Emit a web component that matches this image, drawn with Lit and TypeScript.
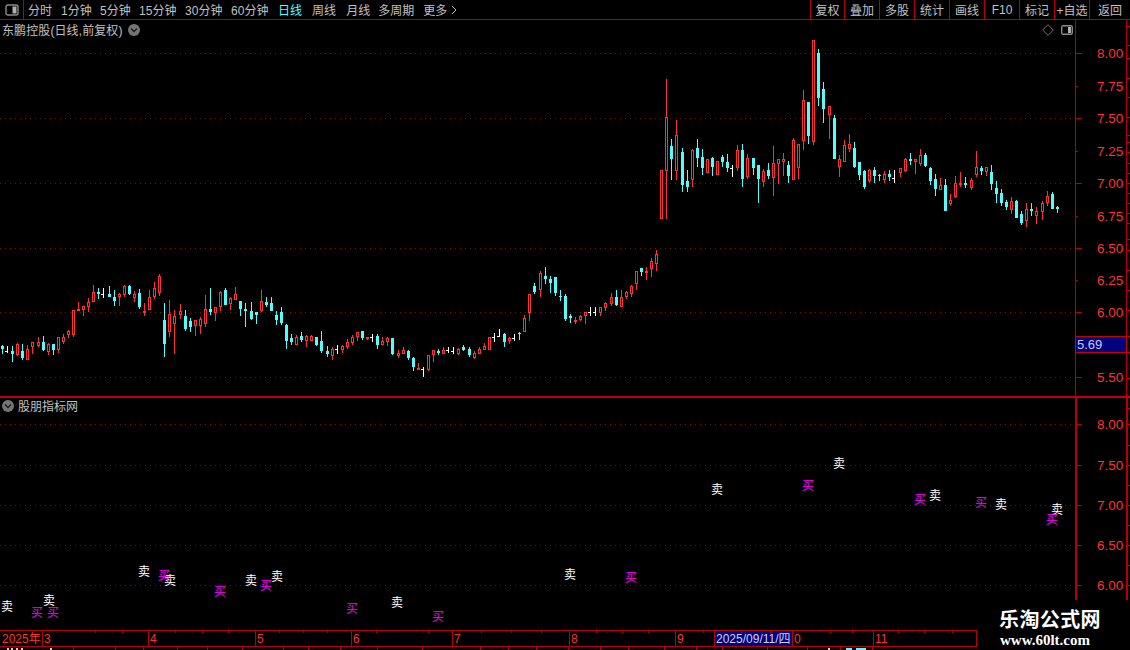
import { LitElement, html, css, svg } from "lit";
import { customElement } from "lit/decorators.js";

type Seg = { ox: number; oy: number; rows: string };
const SEGS: Seg[] = [
  { ox: 0, oy: 270, rows: `7 c 225 229 237 252;22 w 228 243 243 248;37 c 228 243 252 275;52 r 218 222 255 258;67 c 222 243 264 270;82 r 225 237 269 270;97 r 217 217 231 252;115 r 202 217 228 232;130 c 198 216 240 243;145 r 218 222 246 255;160 c 222 223 240 255;175 r 201 201 240 249;190 r 193 201 217 222;205 r 180 183 195 204;220 r 120 120 195 201;235 r 96 117 123 123;250 r 108 108 120 138;265 r 84 96 111 126;280 r 45 66 96 96;295 c 54 66 72 87;310 w 54 72 72 84;328 c 48 72 81 81;343 c 60 81 93 108;358 r 69 72 81 108;373 r 45 48 75 81;388 c 45 48 72 75;403 r 63 72 84 96;418 c 57 69 111 117;433 r 99 123 129 138;448 r 60 81 120 120;463 r 36 54 81 87;478 r 12 18 69 78;493 c 99 150 222 261;508 r 90 132 186 201;523 r 120 138 162 252;541 r 102 123 135 147;556 c 120 138 178 183;571 c 144 153 171 186;586 r 150 150 168 198;601 r 141 147 168 192;616 r 75 117 162 171;631 c 54 117 126 135;646 r 111 111 129 153;661 r 63 66 111 123;676 c 54 60 105 105;691 r 81 84 102 120;706 r 51 72 90 90;721 c 93 93 117 138;736 c 99 117 123 171;754 c 96 123 147 150;769 c 126 126 135 162;784 r 60 93 123 126;799 c 81 96 105 111;814 c 81 99 123 123;829 c 123 135 150 165;844 c 111 126 159 165;859 c 162 165 213 237;874 c 192 204 216 225;889 r 195 201 225 225;904 c 186 198 210 216;919 r 195 198 213 231;934 r 195 198 213 213;949 c 201 201 225 228;964 c 183 213 243 249;982 c 228 243 252 261;997 r 231 237 258 270;1012 w 225 237 237 252` },
  { ox: 340, oy: 230, rows: `7 r 345 348 360 370;22 r 327 336 350 357;37 r 315 321 340 345;52 r 306 306 321 333;67 c 303 303 324 330;82 r 321 321 327 330;97 w 312 321 321 336;112 c 312 318 345 357;127 r 321 333 345 345;142 r 321 324 336 348;157 c 324 324 372 375;175 r 360 369 378 384;190 r 351 360 372 372;205 c 360 363 384 390;220 c 381 384 411 423;235 r 399 414 420 420;250 w 411 417 417 441;265 r 375 375 420 423;280 r 360 360 375 396;295 c 357 363 369 375;310 r 351 360 372 372;325 w 351 360 360 369;340 w 351 363 363 372;355 r 354 357 372 375;370 c 345 351 360 363;388 c 351 357 375 381;403 r 363 369 384 387;418 r 351 357 372 372;433 r 339 348 360 360;448 r 321 321 360 360;463 w 309 321 321 336;478 w 297 318 318 321;493 c 309 312 336 351;508 r 321 324 333 342;523 w 312 324 324 333;538 c 306 309 312 330;553 r 255 264 306 306;568 r 192 192 249 273;583 c 159 168 186 192;601 r 123 129 180 201;616 c 111 138 147 162;631 c 138 147 159 189;646 c 141 141 189 198;661 c 180 198 201 213;676 c 192 198 267 273;691 c 252 258 264 279;706 r 262 270 276 282;721 r 255 258 270 273;736 r 246 246 258 282;751 w 231 246 246 258;766 w 231 246 246 258;781 r 231 231 249 258;796 r 216 219 234 243;814 r 189 201 222 228;829 c 180 201 225 228;844 r 180 201 231 231;859 r 183 186 201 207;874 r 165 168 192 201;889 r 123 123 162 180;904 c 114 114 126 138;919 r 111 123 129 150;934 r 84 93 117 141;949 r 60 72 102 123` },
  { ox: 650, oy: 30, rows: `34 r 420 420 567 567;49 r 147 261 423 567;64 c 327 348 387 450;79 r 270 315 423 450;97 c 354 366 465 486;112 c 420 453 471 486;127 r 357 360 450 471;142 c 327 354 384 411;157 c 357 381 414 435;172 r 387 387 429 429;187 c 381 384 411 438;202 r 393 393 435 435;217 c 375 381 396 411;232 c 372 396 414 426;247 w 405 414 414 441;262 r 345 360 414 423;277 c 342 360 447 471;292 r 372 384 441 447;310 c 384 384 414 435;325 c 405 405 447 519;340 r 417 423 456 471;355 c 399 420 438 447;370 r 348 399 444 498;385 r 387 387 402 462;400 r 369 387 396 438;415 c 393 405 438 459;430 r 324 330 450 450;445 r 342 342 414 447;460 r 180 210 333 360;475 c 216 216 318 342;490 r 30 30 336 345;505 c 57 69 204 228;520 c 156 177 237 279;538 r 228 228 255 327;553 c 255 264 387 387;568 r 375 387 411 441;583 r 330 345 396 396;598 r 312 342 357 366;613 c 336 354 411 414;628 c 396 396 435 450;643 c 420 423 471 477;658 r 417 420 453 459;673 c 411 420 438 459;688 c 432 435 435 453;703 r 423 432 450 459;718 c 420 432 441 453` },
  { ox: 880, oy: 130, rows: `43 w 120 144 144 159;61 r 114 114 129 141;76 r 84 87 123 126;91 c 69 87 93 105;106 r 87 87 95 132;121 r 57 75 102 108;136 c 69 75 108 111;151 c 111 114 153 165;166 c 132 147 177 198;181 r 144 165 180 180;196 c 147 165 243 243;211 r 192 210 222 228;226 r 138 159 201 204;241 r 126 159 165 171;256 c 141 159 165 174;274 r 144 150 174 180;289 r 63 111 135 141;304 c 108 114 123 135;319 r 111 111 126 138;334 c 105 126 162 180;349 c 153 174 192 219;364 c 177 189 219 228;379 c 210 216 231 240;394 r 201 213 240 252;409 c 210 213 264 264;424 c 243 252 279 285;439 r 219 237 273 291;454 c 219 237 243 258;469 r 231 243 258 282;487 r 213 219 246 270;502 r 183 198 219 228;517 c 186 192 237 237;532 c 228 231 237 249` },
];

const RED = "#ff3232";
const CYAN = "#54fcfc";
const LINE = "#b80000";
const GRID = "#7c1010";
const MAIN_TOP = 20;
const SUB_TOP = 398;

const candle = (seg: Seg, row: string) => {
  const [xs, t, a, b, c, d] = row.split(" ");
  const x = Math.round(seg.ox + Number(xs) / 3);
  const py = (v: string) => Math.round(seg.oy + Number(v) / 3) - MAIN_TOP;
  const wt = py(a), bt = py(b), bb = py(c), wb = py(d);
  if (t === "w") {
    return svg`<rect x=${x} y=${wt} width="1" height=${Math.max(wb - wt, 1)} fill="#fff"/><rect x=${x - 2} y=${bt} width="2" height="1" fill="#fff"/>`;
  }
  const col = t === "r" ? RED : CYAN;
  const wick = svg`<rect x=${x} y=${wt} width="1" height=${Math.max(wb - wt, 1)} fill=${col}/>`;
  const h = Math.max(bb - bt, 1);
  if (t === "c" || h < 3) {
    return svg`${wick}<rect x=${x - 1} y=${bt} width="3" height=${h} fill=${col}/>`;
  }
  return svg`${wick}<rect x=${x - 0.5} y=${bt + 0.5} width="2" height=${h - 1} fill="#000" stroke=${col}/>`;
};

const MAIN_GRID = [53, 118, 183, 248, 312, 377];
const MAIN_LABELS: [string, number][] = [
  ["8.00", 53], ["7.75", 86], ["7.50", 118], ["7.25", 151], ["7.00", 183], ["6.75", 216],
  ["6.50", 248], ["6.25", 280], ["6.00", 312], ["5.50", 377],
];
const MAIN_MINOR = [86, 151, 216, 280, 345];
const MAIN_STRIP = [26, 45, 58, 78, 97, 117, 135, 142, 152, 163, 173, 183, 193, 203, 213, 223, 239, 250, 270, 290, 310, 336, 352, 378];
const SUB_LABELS: [string, number][] = [["8.00", 424], ["7.50", 465], ["7.00", 505], ["6.50", 545], ["6.00", 585]];
const SUB_STRIP = [408, 424, 445, 465, 485, 505, 525, 545, 565, 585];

const SIGNALS: [string, number, number][] = [
  ["卖", 7, 606], ["卖", 49, 600], ["卖", 144, 571], ["卖", 170, 580], ["卖", 251, 580], ["卖", 277, 576],
  ["卖", 397, 602], ["卖", 570, 574], ["卖", 717, 489], ["卖", 839, 463], ["卖", 935, 495], ["卖", 1001, 504], ["卖", 1057, 509],
  ["买", 37, 612], ["买", 53, 612], ["买", 164, 575], ["买", 220, 591], ["买", 266, 585], ["买", 352, 608],
  ["买", 438, 616], ["买", 631, 577], ["买", 808, 485], ["买", 920, 499], ["买", 981, 502], ["买", 1052, 519],
];

const TIME_CELLS: { w: number; label: string; active?: boolean }[] = [
  { w: 42, label: "2025年" }, { w: 106, label: "3" }, { w: 107, label: "4" }, { w: 96, label: "5" },
  { w: 101, label: "6" }, { w: 117, label: "7" }, { w: 106, label: "8" }, { w: 39, label: "9" },
  { w: 78, label: "2025/09/11/四", active: true }, { w: 81, label: "0" }, { w: 103, label: "11" },
];
const TOP_TICKS = [95, 122, 175, 202, 228, 279, 303, 327, 376, 428, 481, 511, 541, 596, 622, 648, 703, 741, 770, 830, 852, 898, 924, 952, 977];
const BOTTOM_TICKS = [73, 115, 143, 177, 207, 242, 283, 308, 340, 377, 422, 480, 508, 536, 568, 600, 628, 664, 696, 722, 767, 807, 840, 872];
const STUBS: [number, number, string][] = [[7, 2, "#ccc"], [11, 2, "#ccc"], [16, 2, "#ccc"], [21, 2, "#ccc"], [50, 2, "#ccc"], [828, 2, "#ccc"], [846, 6, CYAN], [856, 10, CYAN]];

const TABS: [string, number][] = [
  ["分时", 9], ["1分钟", 8.33], ["5分钟", 8.33], ["15分钟", 8.67], ["30分钟", 8.67], ["60分钟", 9.67],
  ["日线", 10], ["周线", 10], ["月线", 8], ["多周期", 9],
];
const BTNS: [string, number][] = [["复权", 34], ["叠加", 35], ["多股", 35], ["统计", 35], ["画线", 35], ["F10", 35], ["标记", 35], ["+自选", 35], ["返回", 41]];

const chevronBadge = html`<svg class="badge" width="12" height="12" viewBox="0 0 12 12"><circle cx="6" cy="6" r="6" fill="#757575"/><path d="M3 4.5 6 7.5 9 4.5" fill="none" stroke="#1c1c1c" stroke-width="1.4"/></svg>`;

@customElement("app-root")
export class AppRoot extends LitElement {
  static styles = css`
    :host { display: block; position: relative; width: 1130px; height: 650px; background: #000; overflow: hidden;
      font: 12px "Liberation Sans", "Noto Sans CJK SC", sans-serif; color: #c0c0c0; }
    svg { display: block; }
    .top { display: flex; height: 19px; border-bottom: 1px solid #b80000; }
    .logo { width: 23px; border-right: 1px solid #b80000; display: flex; align-items: center; justify-content: center; }
    .tabs { display: flex; align-items: center; padding-left: 4px; flex: 1; }
    .tab { white-space: nowrap; }
    .tab.on { color: #54ffff; }
    .more { display: flex; align-items: center; gap: 4px; }
    .btns { display: flex; }
    .btn { border-left: 1px solid #b80000; box-sizing: border-box; display: flex; align-items: center; justify-content: center; white-space: nowrap; }
    .panel { position: relative; }
    .main { height: 376px; border-bottom: 2px solid #c00000; }
    .sub { height: 232px; }
    .title { position: absolute; left: 2px; top: 0; height: 19px; width: 1073px; display: flex; align-items: center; gap: 5px; }
    .title .name { letter-spacing: 0.1px; }
    .title .grow { flex: 1; }
    .title .tools { display: flex; align-items: center; gap: 7px; padding-right: 2px; }
    .subtitle { position: absolute; left: 2px; top: 0; height: 15px; display: flex; align-items: center; gap: 4px; }
    .time { position: relative; width: 977px; height: 20px; }
    .cells { display: flex; height: 15px; border-top: 1px solid #b80000; border-bottom: 1px solid #b80000; border-right: 1px solid #b80000; width: 976px; }
    .cell { box-sizing: border-box; border-left: 1px solid #b80000; color: #ff3232; padding-left: 1px; line-height: 16px; white-space: nowrap; overflow: hidden; }
    .cell:first-child { border-left: 0; padding-left: 2px; }
    .cell.on { background: #000080; color: #d0d0e0; padding-left: 1px; }
    .overlay { position: absolute; left: 0; top: 0; pointer-events: none; }
    .mark { position: absolute; right: 0; bottom: 0; width: 153px; height: 50px; background: #000; box-sizing: border-box; padding: 8px 0 0 22px; }
    .mark .cn { font: 700 20px/22px "Noto Sans CJK SC", sans-serif; color: #fff; letter-spacing: 0.4px; white-space: nowrap; }
    .mark .en { font: 700 15px/17px "Liberation Serif", serif; color: #fff; margin-top: 2px; margin-left: 1px; white-space: nowrap; }
  `;

  private renderMain() {
    const y = (v: number) => v - MAIN_TOP;
    return html`<svg width="1130" height="376" shape-rendering="crispEdges">
      ${MAIN_GRID.map((g) => svg`<line x1="0" x2="1075" y1=${y(g) + 0.5} y2=${y(g) + 0.5} stroke=${GRID} stroke-dasharray="1 4"/><rect x="1075" y=${y(g)} width="7" height="1" fill=${LINE}/>`)}
      ${MAIN_MINOR.map((g) => svg`<rect x="1075" y=${y(g)} width="3" height="1" fill=${LINE}/>`)}
      ${MAIN_STRIP.map((g) => svg`<rect x="1126" y=${y(g)} width="4" height="1" fill=${LINE}/>`)}
      <rect x="1075" y="0" width="1" height="376" fill=${LINE}/>
      <rect x="1126" y="0" width="1" height="376" fill=${LINE}/>
      ${SEGS.map((s) => s.rows.split(";").map((r) => candle(s, r)))}
      <g shape-rendering="auto">
      ${MAIN_LABELS.map(([t, g]) => svg`<text x="1097" y=${y(g) + 5} fill=${RED} font-size="13.5" font-family="Liberation Sans">${t}</text>`)}
      </g>
      <rect x="1075.5" y=${y(336) + 0.5} width="51" height="16" fill="#000080" stroke="#c80000"/>
      <text x="1077" y=${y(344) + 5} fill="#c8c8e0" font-size="13" font-family="Liberation Sans" shape-rendering="auto">5.69</text>
    </svg>`;
  }

  private renderSub() {
    const y = (v: number) => v - SUB_TOP;
    return html`<svg width="1130" height="232" shape-rendering="crispEdges">
      ${SUB_LABELS.map(([, g]) => svg`<line x1="0" x2="1075" y1=${y(g) + 0.5} y2=${y(g) + 0.5} stroke=${GRID} stroke-dasharray="1 4"/><rect x="1075" y=${y(g)} width="7" height="1" fill=${LINE}/>`)}
      ${SUB_STRIP.map((g) => svg`<rect x="1126" y=${y(g)} width="4" height="1" fill=${LINE}/>`)}
      <rect x="1075" y="0" width="2" height="232" fill=${LINE}/>
      <rect x="1126" y="0" width="2" height="232" fill=${LINE}/>
      <g shape-rendering="auto">
      ${SUB_LABELS.map(([t, g]) => svg`<text x="1097" y=${y(g) + 5} fill=${RED} font-size="13.5" font-family="Liberation Sans">${t}</text>`)}
      ${SIGNALS.map(([t, sx, sy]) => svg`<text x=${sx} y=${y(sy) + 5} text-anchor="middle" fill=${t === "买" ? "#ff00ff" : "#fff"} font-size="12" font-family="Noto Sans CJK SC">${t}</text>`)}
      </g>
    </svg>`;
  }

  render() {
    return html`
      <div class="top">
        <div class="logo">
          <svg width="14" height="12" viewBox="0 0 14 12"><rect x="1" y="1" width="12" height="10" rx="2" fill="#000" stroke="#8a8a8a" stroke-width="1.4"/><rect x="7.5" y="2.5" width="4" height="7" fill="#b0b0b0"/></svg>
        </div>
        <div class="tabs">
          ${TABS.map(([t, gap]) => html`<span class="tab ${t === "日线" ? "on" : ""}" style="margin-right:${gap}px">${t}</span>`)}
          <span class="tab more">更多<svg width="6" height="10" viewBox="0 0 6 10"><path d="M1 1 5 5 1 9" fill="none" stroke="#c0c0c0"/></svg></span>
        </div>
        <div class="btns">
          ${BTNS.map(([t, w]) => html`<div class="btn" style="width:${w}px">${t}</div>`)}
        </div>
      </div>
      <div class="panel main">
        ${this.renderMain()}
        <div class="title">
          <span class="name">东鹏控股(日线,前复权)</span>${chevronBadge}
          <span class="grow"></span>
          <span class="tools">
            <svg width="12" height="12" viewBox="0 0 12 12"><path d="M6 .7 11.3 6 6 11.3 .7 6Z" fill="none" stroke="#707070"/></svg>
            <svg width="12" height="10" viewBox="0 0 12 10"><rect x=".7" y=".7" width="10.6" height="8.6" rx="1.5" fill="#000" stroke="#8a8a8a" stroke-width="1.4"/><rect x="7" y="2" width="3" height="6" fill="#b0b0b0"/></svg>
          </span>
        </div>
      </div>
      <div class="panel sub">
        ${this.renderSub()}
        <div class="subtitle">${chevronBadge}<span>股朋指标网</span></div>
      </div>
      <div class="time">
        <div class="cells">
          ${TIME_CELLS.map((c) => html`<div class="cell ${c.active ? "on" : ""}" style="width:${c.w}px">${c.label}</div>`)}
        </div>
        <svg class="overlay" width="977" height="20" shape-rendering="crispEdges">
          ${TOP_TICKS.map((x) => svg`<rect x=${x} y="1" width="1" height="2" fill=${LINE}/>`)}
          ${BOTTOM_TICKS.map((x) => svg`<rect x=${x} y="17" width="1" height="3" fill=${LINE}/>`)}
          ${STUBS.map(([x, w, c]) => svg`<rect x=${x} y="18" width=${w} height="2" fill=${c}/>`)}
        </svg>
      </div>
      <div class="mark">
        <div class="cn">乐淘公式网</div>
        <div class="en">www.60lt.com</div>
      </div>
    `;
  }
}
